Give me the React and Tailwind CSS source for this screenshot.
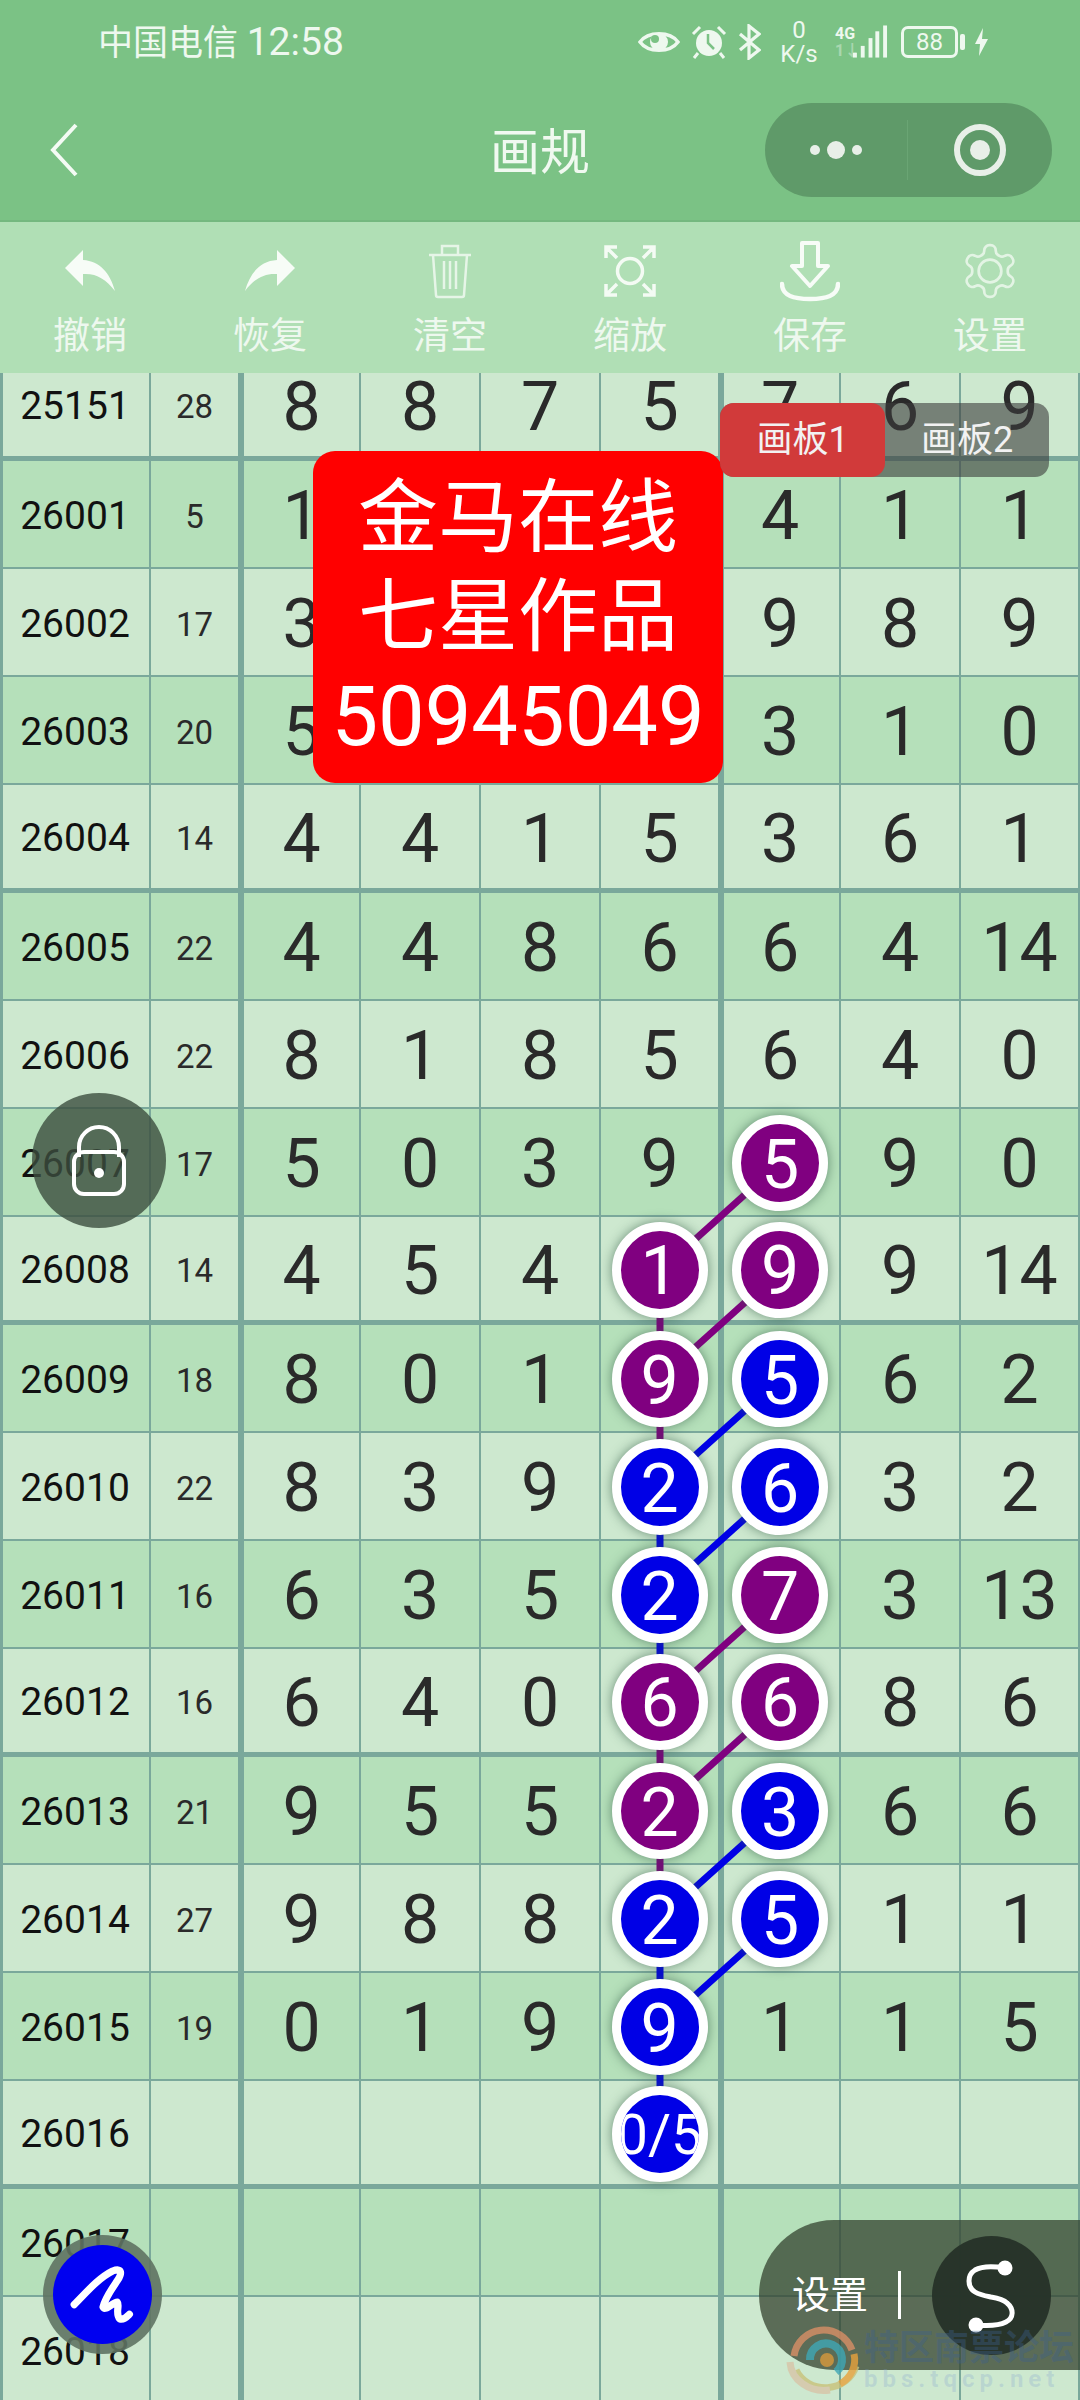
import React from "react";

const p = (v) => ({ v, c: "p" });
const b = (v) => ({ v, c: "b" });

// rows below the header, first one is half hidden under the toolbar
const rows = [
  ["25151", "28", "8", "8", "7", "5", "7", "6", "9"],
  ["26001", "5", "1", "", "", "", "4", "1", "1"],
  ["26002", "17", "3", "", "", "", "9", "8", "9"],
  ["26003", "20", "5", "", "", "", "3", "1", "0"],
  ["26004", "14", "4", "4", "1", "5", "3", "6", "1"],
  ["26005", "22", "4", "4", "8", "6", "6", "4", "14"],
  ["26006", "22", "8", "1", "8", "5", "6", "4", "0"],
  ["26007", "17", "5", "0", "3", "9", p("5"), "9", "0"],
  ["26008", "14", "4", "5", "4", p("1"), p("9"), "9", "14"],
  ["26009", "18", "8", "0", "1", p("9"), b("5"), "6", "2"],
  ["26010", "22", "8", "3", "9", b("2"), b("6"), "3", "2"],
  ["26011", "16", "6", "3", "5", b("2"), p("7"), "3", "13"],
  ["26012", "16", "6", "4", "0", p("6"), p("6"), "8", "6"],
  ["26013", "21", "9", "5", "5", p("2"), b("3"), "6", "6"],
  ["26014", "27", "9", "8", "8", b("2"), b("5"), "1", "1"],
  ["26015", "19", "0", "1", "9", b("9"), "1", "1", "5"],
  ["26016", "", "", "", "", b("0/5"), "", "", ""],
  ["26017", "", "", "", "", "", "", "", ""],
  ["26018", "", "", "", "", "", "", "", ""],
];

const colClass = [
  "w-[148px] border-r-[2px] pr-[2px] text-[39px] text-[#111]",
  "w-[93px] border-r-[6px] text-[33px] text-[#2a2a2a]",
  "w-[117px] border-r-[2px] text-[68px] text-[#2a2a2a]",
  "w-[120px] border-r-[2px] text-[68px] text-[#2a2a2a]",
  "w-[120px] border-r-[2px] text-[68px] text-[#2a2a2a]",
  "w-[123px] border-r-[6px] text-[68px] text-[#2a2a2a]",
  "w-[117px] border-r-[2px] pr-[3px] text-[68px] text-[#2a2a2a]",
  "w-[120px] border-r-[2px] text-[68px] text-[#2a2a2a]",
  "w-[119px] border-r-[2px] text-[68px] text-[#2a2a2a]",
];

// page coords of the ball columns and rows, only used by the link lines
const ballX = { 5: 660, 6: 780 };
const ballY = (i) => 353 + i * 108 + 54;

const links = [];
rows.forEach((row, i) => {
  [5, 6].forEach((col) => {
    const cell = row[col];
    if (cell && cell.c && rows[i + 1] && rows[i + 1][5].c) {
      links.push({ x1: ballX[col], y1: ballY(i), x2: ballX[5], y2: ballY(i + 1), c: cell.c });
    }
  });
});

const Ball = ({ cell }) => (
  <div
    className={`relative z-10 mt-[-2px] flex h-[96px] w-[96px] shrink-0 items-center justify-center overflow-hidden whitespace-nowrap rounded-full border-[9px] border-white pt-[3px] text-white shadow-[0_0_12px_rgba(50,90,70,0.65)] ${
      cell.c === "p" ? "bg-[#800080]" : "bg-[#0000e6]"
    } ${cell.v.length > 1 ? "text-[56px]" : "text-[68px]"}`}
  >
    {cell.v}
  </div>
);

const Gear = () => (
  <svg viewBox="0 0 24 24" className="h-[62px] w-[62px] opacity-75" fill="none" stroke="#f4fbf4" strokeWidth="1.05">
    <path d="M12.22 2h-.44a2 2 0 0 0-2 2v.18a2 2 0 0 1-1 1.73l-.43.25a2 2 0 0 1-2 0l-.15-.08a2 2 0 0 0-2.73.73l-.22.38a2 2 0 0 0 .73 2.73l.15.1a2 2 0 0 1 1 1.72v.51a2 2 0 0 1-1 1.74l-.15.09a2 2 0 0 0-.73 2.73l.22.38a2 2 0 0 0 2.73.73l.15-.08a2 2 0 0 1 2 0l.43.25a2 2 0 0 1 1 1.73V20a2 2 0 0 0 2 2h.44a2 2 0 0 0 2-2v-.18a2 2 0 0 1 1-1.73l.43-.25a2 2 0 0 1 2 0l.15.08a2 2 0 0 0 2.73-.73l.22-.39a2 2 0 0 0-.73-2.73l-.15-.08a2 2 0 0 1-1-1.74v-.5a2 2 0 0 1 1-1.74l.15-.09a2 2 0 0 0 .73-2.73l-.22-.38a2 2 0 0 0-2.73-.73l-.15.08a2 2 0 0 1-2 0l-.43-.25a2 2 0 0 1-1-1.73V4a2 2 0 0 0-2-2z" />
    <circle cx="12" cy="12" r="4.4" />
  </svg>
);

const tools = [
  {
    label: "撤销",
    icon: (
      <svg viewBox="0 0 60 60" className="h-[60px] w-[60px]" fill="#f7fcf7">
        <path d="M5 27 L23 9 V19 C40 20 50 32 55 50 C46 38 36 32 23 33 V45 Z" />
      </svg>
    ),
  },
  {
    label: "恢复",
    icon: (
      <svg viewBox="0 0 60 60" className="h-[60px] w-[60px]" fill="#f7fcf7">
        <path transform="translate(60 0) scale(-1 1)" d="M5 27 L23 9 V19 C40 20 50 32 55 50 C46 38 36 32 23 33 V45 Z" />
      </svg>
    ),
  },
  {
    label: "清空",
    icon: (
      <svg viewBox="0 0 60 60" className="h-[60px] w-[60px] opacity-80" fill="none" stroke="#f4fbf4" strokeWidth="2.5">
        <path d="M9 14 H51 M22 14 V5 H38 V14 M13 14 L16 54 Q16 56 18 56 H42 Q44 56 44 54 L47 14 M24 20 V48 M30 20 V48 M36 20 V48" />
      </svg>
    ),
  },
  {
    label: "缩放",
    icon: (
      <svg viewBox="0 0 60 60" className="h-[60px] w-[60px]" fill="none" stroke="#f4fbf4" strokeWidth="3.5">
        <circle cx="30" cy="30" r="12.5" />
        <path d="M6 17 V6 H17 M6 6 L17 17 M54 17 V6 H43 M54 6 L43 17 M6 43 V54 H17 M6 54 L17 43 M54 43 V54 H43 M54 54 L43 43" />
      </svg>
    ),
  },
  {
    label: "保存",
    icon: (
      <svg viewBox="0 0 60 62" className="h-[62px] w-[60px]" fill="none" stroke="#f7fcf7" strokeWidth="4" strokeLinejoin="round" strokeLinecap="round">
        <path d="M22 3 H38 V26 H48 L30 46 L12 26 H22 Z" />
        <path strokeWidth="4.5" d="M2 44 C2 56 14 59 30 59 C46 59 58 56 58 44" />
      </svg>
    ),
  },
  { label: "设置", icon: <Gear /> },
];

const StatusIcons = () => (
  <div className="flex items-center text-[#eef8ef]">
    <svg viewBox="0 0 42 28" className="h-[28px] w-[42px]">
      <path fill="none" stroke="#eef8ef" strokeWidth="3.5" d="M2 14 C10 3 32 3 40 14 C32 25 10 25 2 14 Z" />
      <circle cx="21" cy="14" r="9" fill="#eef8ef" />
      <circle cx="17" cy="11" r="4" fill="#7bc285" />
    </svg>
    <svg viewBox="0 0 36 34" className="ml-[11px] h-[34px] w-[36px]">
      <circle cx="18" cy="18" r="13" fill="#eef8ef" />
      <path fill="none" stroke="#7bc285" strokeWidth="2.5" d="M17 9 V18 L23 24" />
      <path fill="none" stroke="#eef8ef" strokeWidth="3" d="M2 9 L9 2 M34 9 L27 2 M7 28 L3 33 M29 28 L33 33" />
    </svg>
    <svg viewBox="0 0 23 36" className="ml-[11px] h-[36px] w-[23px]">
      <path fill="none" stroke="#eef8ef" strokeWidth="3.2" d="M2 10 L21 26 L11 34 V2 L21 10 L2 26" />
    </svg>
    <div className="ml-[20px] flex w-[36px] flex-col items-center text-[24px] leading-[24px]">
      <span>0</span>
      <span>K/s</span>
    </div>
    <div className="ml-[18px] flex items-end">
      <div className="flex w-[18px] flex-col whitespace-nowrap text-[16px] font-bold leading-[17px]">
        <span>4G</span>
        <span className="opacity-40">1↓</span>
      </div>
      <svg viewBox="0 0 36 34" className="h-[34px] w-[35px]" fill="#eef8ef">
        <rect x="0" y="28" width="4" height="5" />
        <rect x="8" y="21" width="4" height="12" />
        <rect x="16" y="13" width="4" height="20" />
        <rect x="23" y="6" width="4" height="27" />
        <rect x="31" y="0" width="4" height="33" />
      </svg>
    </div>
    <div className="ml-[13px] flex h-[32px] w-[57px] items-center justify-center rounded-[7px] border-[3px] border-[#eef8ef] text-[24px] leading-none">
      88
    </div>
    <div className="ml-[2px] h-[16px] w-[5px] rounded-[2px] bg-[#eef8ef]" />
    <svg viewBox="0 0 15 28" className="ml-[9px] h-[28px] w-[15px]" fill="#eef8ef">
      <path d="M9 0 L1 16 H6 L5 28 L14 11 H8 Z" />
    </svg>
  </div>
);

export default function App() {
  return (
    <div className="relative h-[2400px] w-[1080px] overflow-hidden bg-[#cde8cf] font-[Roboto,'Noto_Sans_CJK_SC',sans-serif]">
      <header className="relative z-20 h-[222px] border-b-[2px] border-[#74b87f] bg-[#7bc285] text-[#f0f9f0]">
        <div className="flex h-[84px] items-center justify-between pl-[98px] pr-[91px]">
          <span className="text-[35px] leading-none text-[#eef8ef]">
            中国电信 <span className="text-[39px]">12:58</span>
          </span>
          <StatusIcons />
        </div>
        <div className="flex items-center pl-[50px] pr-[28px] pt-[19px]">
          <div className="w-[440px]">
            <svg viewBox="0 0 28 54" className="h-[54px] w-[28px]" fill="none" stroke="#f4fbf4" strokeWidth="4">
              <path d="M26 2 L3 27 L26 52" />
            </svg>
          </div>
          <div className="w-[100px] whitespace-nowrap pt-[6px] text-center text-[50px] leading-none">画规</div>
          <div className="flex flex-1 justify-end">
            <div className="flex h-[94px] w-[287px] items-center rounded-full bg-[#5f9a69]">
              <div className="flex h-[60px] w-[143px] items-center justify-center gap-[7px] border-r-[1px] border-[#6aa574]">
                <span className="h-[10px] w-[10px] rounded-full bg-[#e8efe8]" />
                <span className="h-[18px] w-[18px] rounded-full bg-[#e8efe8]" />
                <span className="h-[10px] w-[10px] rounded-full bg-[#e8efe8]" />
              </div>
              <div className="flex flex-1 items-center justify-center">
                <div className="flex h-[52px] w-[52px] items-center justify-center rounded-full border-[6px] border-[#e8efe8]">
                  <span className="h-[20px] w-[20px] rounded-full bg-[#e8efe8]" />
                </div>
              </div>
            </div>
          </div>
        </div>
      </header>

      <div className="relative z-20 grid h-[151px] grid-cols-6 bg-[#b0dfb5] pt-[18px]">
        {tools.map((t) => (
          <div key={t.label} className="flex flex-col items-center">
            <div className="flex h-[62px] items-center justify-center">{t.icon}</div>
            <div className="mt-[15px] text-[37px] leading-[40px] text-[#eef8ef]">{t.label}</div>
          </div>
        ))}
      </div>

      <div className="mt-[-20px]">
        {rows.map((row, i) => (
          <div
            key={row[0]}
            className={`box-border flex h-[108px] border-l-[3px] border-[#7aa89b] ${
              i % 4 === 0 ? "border-b-[5px]" : "border-b-[2px]"
            } ${i % 2 === 0 ? "bg-[#cde8cf]" : "bg-[#b5e0ba]"}`}
          >
            {row.map((cell, c) => (
              <div
                key={c}
                className={`flex items-center justify-center border-[#7aa89b] pt-[4px] leading-none ${colClass[c]}`}
              >
                {cell && cell.c ? <Ball cell={cell} /> : cell}
              </div>
            ))}
          </div>
        ))}
      </div>

      {/* link lines between the picked balls */}
      <svg className="absolute left-0 top-0 h-[2400px] w-[1080px]" viewBox="0 0 1080 2400">
        {links.map((l, i) => (
          <line
            key={i}
            x1={l.x1}
            y1={l.y1}
            x2={l.x2}
            y2={l.y2}
            strokeWidth="7"
            className={l.c === "p" ? "stroke-[#800080]" : "stroke-[#0000e6]"}
          />
        ))}
      </svg>

      {/* red note */}
      <div className="absolute left-[313px] top-[451px] z-10 flex h-[332px] w-[410px] flex-col items-center justify-center rounded-[22px] bg-[#ff0000] text-[80px] leading-[99px] text-white">
        <div>金马在线</div>
        <div>七星作品</div>
        <div className="text-[83px]">50945049</div>
      </div>

      {/* board tabs */}
      <div className="absolute left-[720px] top-[403px] z-10 flex h-[74px] w-[329px] rounded-[14px] bg-[#3c3c3c]/60 text-[36px] text-[#f2f2f2]">
        <div className="flex w-[165px] items-center justify-center rounded-[14px] bg-[#d13a3a]">画板1</div>
        <div className="flex flex-1 items-center justify-center">画板2</div>
      </div>

      {/* lock */}
      <div className="absolute left-[32px] top-[1093px] z-10 flex h-[135px] w-[134px] items-center justify-center rounded-full bg-[#3c4d3f]/80">
        <svg viewBox="0 0 54 72" className="h-[72px] w-[54px]" fill="none" stroke="#ffffff" strokeWidth="4">
          <path d="M7 32 V22 A20 20 0 0 1 47 22 V32" />
          <rect x="2" y="27" width="50" height="42" rx="10" />
          <circle cx="27" cy="48" r="5" fill="#ffffff" stroke="none" />
        </svg>
      </div>

      {/* brush */}
      <div className="absolute left-[43px] top-[2235px] z-10 flex h-[119px] w-[119px] items-center justify-center rounded-full bg-[#5f7363]/90">
        <div className="flex h-[99px] w-[99px] items-center justify-center rounded-full bg-[#0000f0]">
          <svg viewBox="0 0 60 60" className="h-[72px] w-[72px]" fill="none" stroke="#ffffff" strokeWidth="6" strokeLinecap="round" strokeLinejoin="round">
            <path d="M6 38 C16 28 26 16 38 10 C46 7 46 12 42 18 C38 24 32 32 30 40 C32 44 38 36 42 36 C44 38 40 46 44 50 C48 51 50 48 52 46" />
          </svg>
        </div>
      </div>

      {/* settings pill */}
      <div className="absolute left-[759px] top-[2220px] z-10 flex h-[150px] w-[321px] items-center rounded-l-[75px] bg-[#34432f]/75 pl-[33px]">
        <span className="text-[38px] leading-none text-white">设置</span>
        <div className="ml-[30px] h-[48px] w-[3px] bg-white" />
        <div className="ml-[31px] flex h-[119px] w-[119px] items-center justify-center rounded-full bg-[#263228]/95">
          <svg viewBox="0 0 55 75" className="h-[75px] w-[55px]" fill="none" stroke="#ffffff" strokeWidth="5">
            <path d="M41 10 C28 8 18 8 11 12 C3 17 3 29 11 34 C16 37 22 38 27 39 C33 40 39 41 43 45 C50 51 50 60 42 64 C34 68 22 68 12 67" />
            <circle cx="41" cy="10" r="7.5" fill="#ffffff" stroke="none" />
            <circle cx="12" cy="67" r="7.5" fill="#ffffff" stroke="none" />
          </svg>
        </div>
      </div>

      {/* forum watermark */}
      <div className="absolute left-[786px] top-[2326px] z-10 flex items-center">
        <svg viewBox="0 0 76 70" className="h-[70px] w-[76px] opacity-80" fill="none" strokeWidth="7">
          <path stroke="#d98f66" d="M8 30 A30 30 0 0 1 66 24" />
          <path stroke="#c9c27a" d="M10 44 A32 30 0 0 0 70 40" />
          <path stroke="#d8c4a8" d="M4 36 A34 30 0 0 0 44 64" />
          <path stroke="#e8a23c" d="M68 28 A30 28 0 0 1 54 58" />
          <path stroke="#3fa7b5" d="M24 34 A16 16 0 1 1 50 46" strokeWidth="8" />
          <circle cx="41" cy="34" r="7" fill="#d89a3c" />
        </svg>
        <div className="ml-[2px] flex flex-col">
          <span className="text-[35px] font-bold leading-[36px] text-[#3d5f8e]/40">特区南票论坛</span>
          <span className="text-[24px] font-bold leading-[24px] tracking-[5px] text-[#7f9fd0]/25">bbs.tqcp.net</span>
        </div>
      </div>
    </div>
  );
}
